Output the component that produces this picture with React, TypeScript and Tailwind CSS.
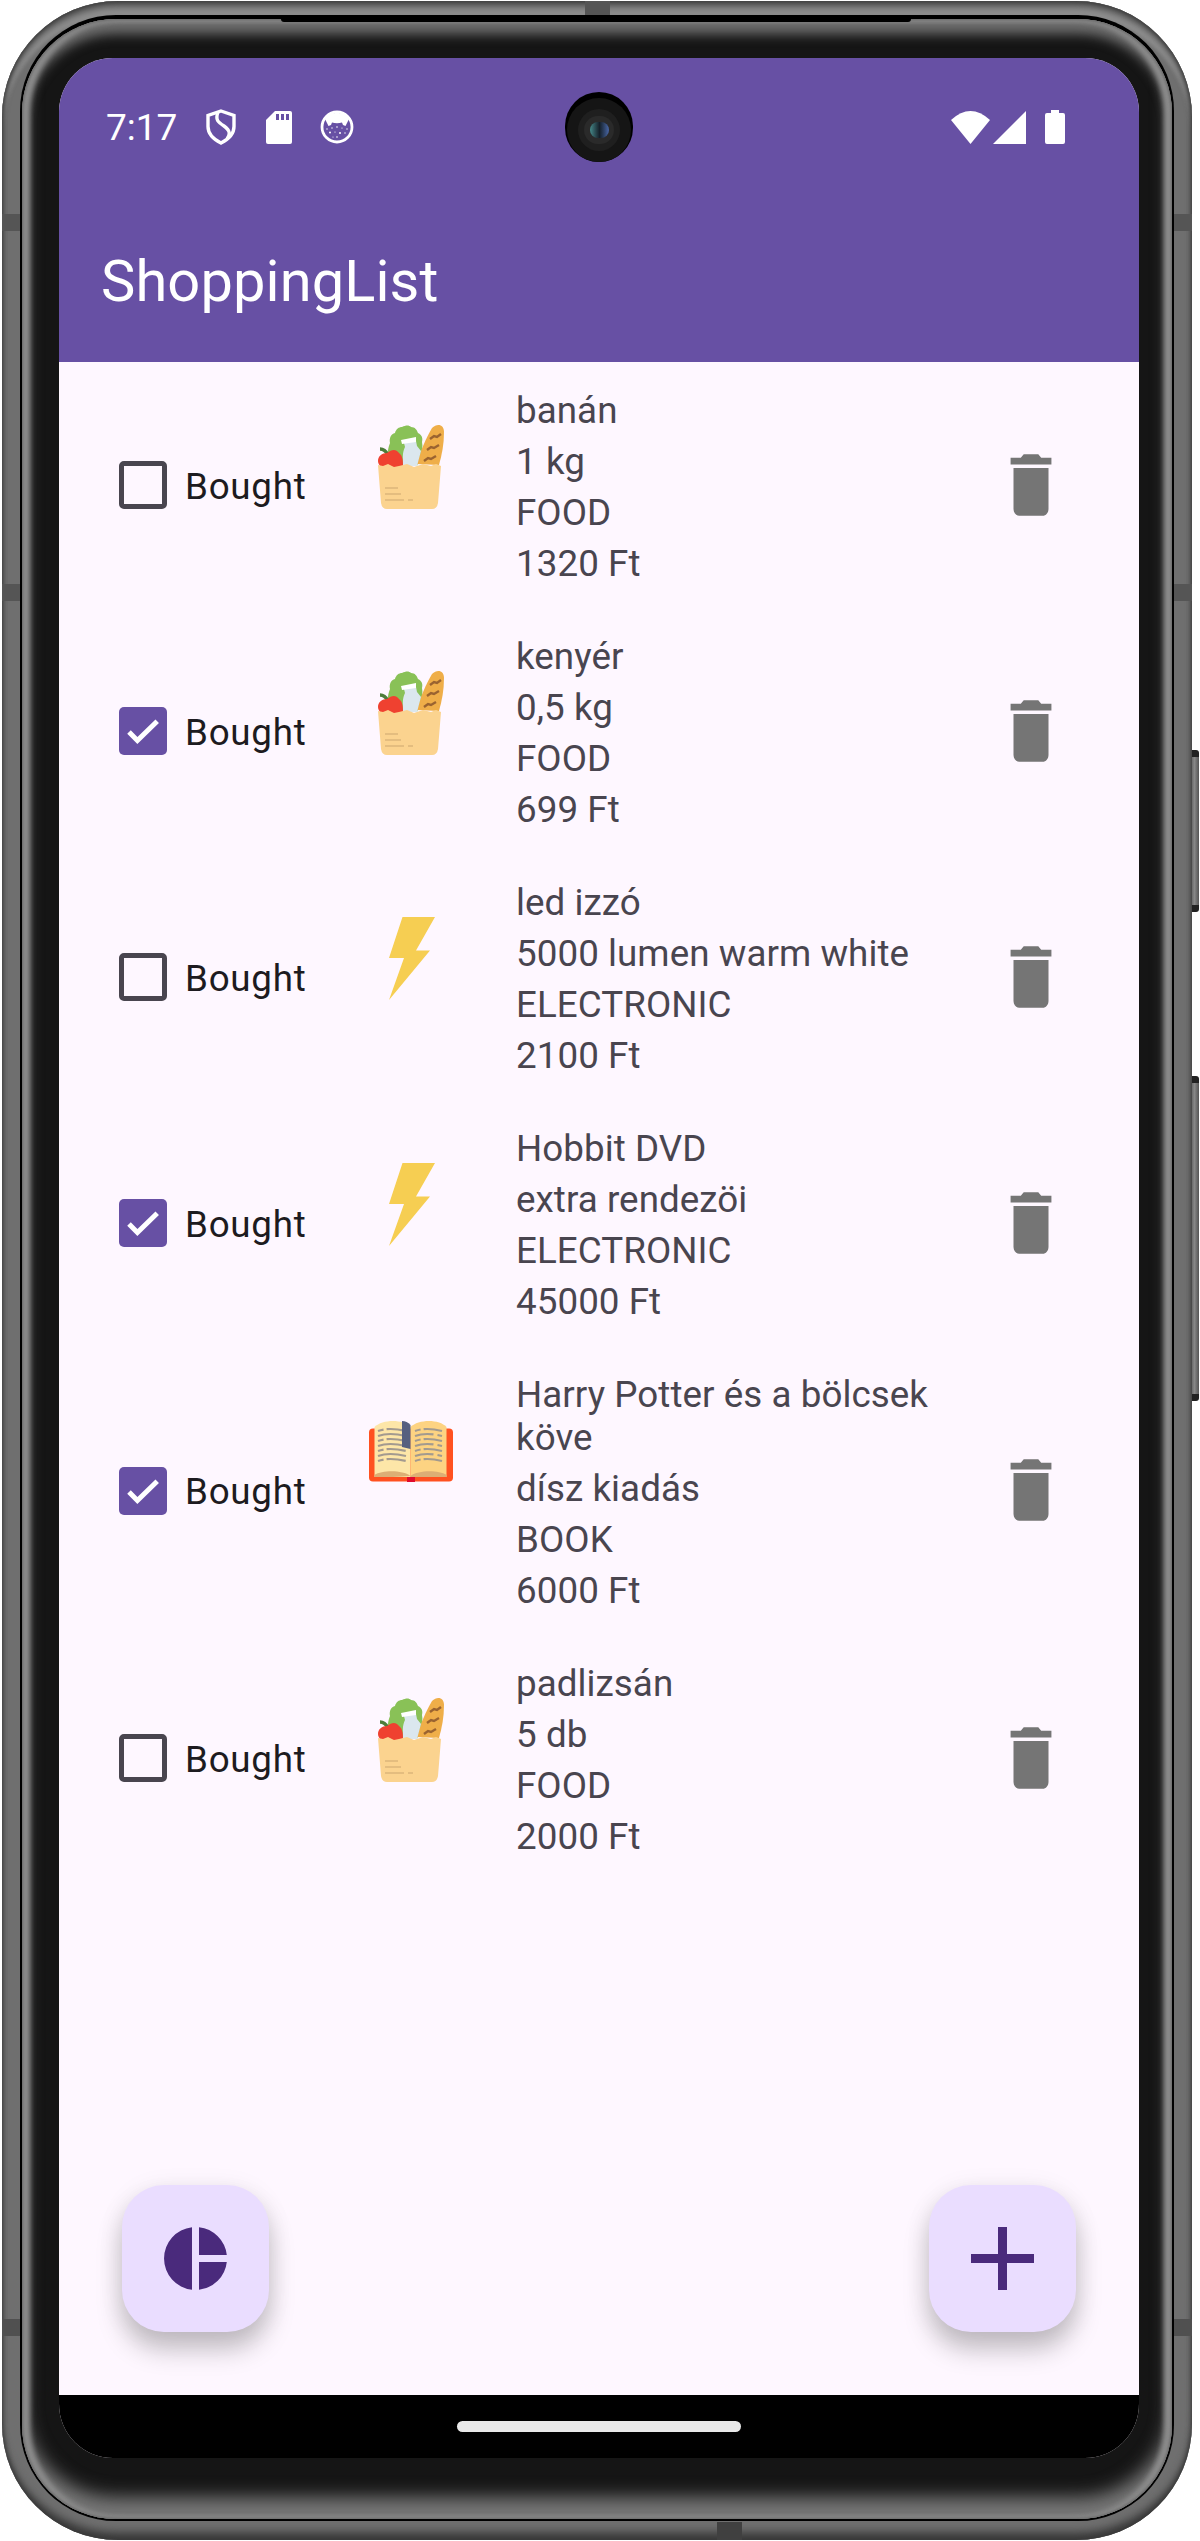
import React from "react";

type Kind = "food" | "electronic" | "book";
type Item = { name: string; detail: string; category: string; price: string; kind: Kind; bought: boolean };

const items: Item[] = [
  { name: "banán", detail: "1 kg", category: "FOOD", price: "1320 Ft", kind: "food", bought: false },
  { name: "kenyér", detail: "0,5 kg", category: "FOOD", price: "699 Ft", kind: "food", bought: true },
  { name: "led izzó", detail: "5000 lumen warm white", category: "ELECTRONIC", price: "2100 Ft", kind: "electronic", bought: false },
  { name: "Hobbit DVD", detail: "extra rendezöi", category: "ELECTRONIC", price: "45000 Ft", kind: "electronic", bought: true },
  { name: "Harry Potter és a bölcsek köve", detail: "dísz kiadás", category: "BOOK", price: "6000 Ft", kind: "book", bought: true },
  { name: "padlizsán", detail: "5 db", category: "FOOD", price: "2000 Ft", kind: "food", bought: false },
];

function Groceries() {
  return (
    <svg width="120" height="130" viewBox="0 0 120 130">
      <path d="M40 66c-3-8-3-16 0-23-1-5 1-9 5-10 1-4 4-6 7-6 4-2 7-2 9 0 4 0 6 3 7 6 4 2 5 5 4 9 1 5 0 8-1 12l-4 12z" fill="#89c157" />
      <path d="M30 49q5 0 8 6" fill="none" stroke="#4d7c3a" strokeWidth="3.4" />
      <path d="M67 64c4-14 8-24 15-36 5-5 12-4 12 4 0 12-2 22-5 33z" fill="#efae49" />
      <path d="M80 39l4-3 3 1 4-3M77 50l4-3 3 1 5-3M74 61l4-3 3 1 5-3" fill="none" stroke="#9a6330" strokeWidth="2.4" />
      <path d="M54 43l12-2 1 5 4 5-4 15H53c0-8-1-13 2-19z" fill="#dbe7ee" />
      <path d="M51 40l15-3v5l-14 2z" fill="#fff" />
      <path d="M28 61c0-5 4-8 9-8 5-4 9-4 12 0 4 3 4 8 4 14H31c-2-2-3-4-3-6z" fill="#ef4130" />
      <path d="M28 65l5 1 5-2 6 3 5-1 8-2 7 3 9-3 8 2 5-2 5 2-3 37q-1 6-6 6H37q-5 0-6-6z" fill="#fbd38f" />
      <path d="M35 88h13M35 94h16M35 100h19M58 100h5" stroke="#e4bd7f" strokeWidth="2.2" />
    </svg>
  );
}

function Bolt() {
  return (
    <svg width="120" height="130" viewBox="0 0 120 130">
      <path d="M52.500 25H85L66 58.500h14L39 108l15-42H39z" fill="#f6ce52" />
    </svg>
  );
}

function Book() {
  const rows = [41, 46, 51, 56, 61, 66, 71];
  return (
    <svg width="120" height="130" viewBox="0 -6 120 130">
      <rect x="19" y="38.500" width="84" height="53" rx="4" fill="#ff5120" />
      <path d="M24.500 37c8-8 29-8 36 0v50h-36z" fill="#fde6a8" />
      <path d="M60.500 37c8-8 29-8 36 0v50h-36z" fill="#fdd382" />
      <path d="M24.500 85c8-5 28-5 36 1-8 1-28 1-36 1zM60.500 86c8-6 28-6 36-1v2h-36z" fill="#dcae75" />
      {rows.map((y, i) => (
        <g key={y} fill="none" stroke="#a39a8f" strokeWidth="2.200">
          <path d={`M28 ${y}q11-4 28 0`} strokeDasharray={i % 2 ? "40" : "6 3 19 3"} />
          <path d={`M65 ${y}q11-4 27 0`} strokeDasharray={i % 2 ? "19 4 8" : "6 3 19"} />
        </g>
      ))}
      <path d="M52 31q5 0 8.500 4v24l-8.500-2z" fill="#56607f" />
      <rect x="57" y="87" width="8" height="5" fill="#e00b2d" />
    </svg>
  );
}

function CheckBox({ checked }: { checked: boolean }) {
  if (!checked) return <div className="-mt-1 h-12 w-12 shrink-0 rounded-[5px] border-[5px] border-[#49454f]" />;
  return (
    <div className="-mt-1 flex h-12 w-12 shrink-0 items-center justify-center rounded-[5px] bg-[#6750a4]">
      <svg width="48" height="48" viewBox="0 0 48 48" fill="none" stroke="#fff" strokeWidth="5">
        <path d="M10 25 18.400 33.500 38.200 14.200" />
      </svg>
    </div>
  );
}

function Row({ item }: { item: Item }) {
  return (
    <li className="flex items-center pt-[27px] pb-[23px] pl-[60px]">
      <CheckBox checked={item.bought} />
      <span className="-mt-[2px] ml-[18px] w-[165px] text-[36.75px] leading-[43px] tracking-[0.75px] text-[#1d1b20]">Bought</span>
      <div className="h-[130px] w-[120px] shrink-0 self-start pt-[11px]">
        {item.kind === "food" ? <Groceries /> : item.kind === "electronic" ? <Bolt /> : <Book />}
      </div>
      <div className="ml-[46px] flex w-[440px] flex-col gap-2 text-[36.75px] leading-[43px] tracking-[0.06px] text-[#49454f]">
        <p>{item.name}</p>
        <p>{item.detail}</p>
        <p>{item.category}</p>
        <p>{item.price}</p>
      </div>
      <svg className="-mt-[5px] ml-[40px]" width="70" height="82" viewBox="0 0 24 24" preserveAspectRatio="none" fill="#757575">
        <path d="M6 19c0 1.100.9 2 2 2h8c1.100 0 2-.9 2-2V7H6v12zM19 4h-3.500l-1-1h-5l-1 1H5v2h14V4z" />
      </svg>
    </li>
  );
}

function Camera() {
  return (
    <div className="absolute top-[34px] left-[506px] flex h-[70px] w-[68px] items-center justify-center rounded-full bg-black pt-[5px]">
      <div className="flex h-[64px] w-[64px] items-center justify-center rounded-full bg-[#151515]">
        <div className="flex h-[42px] w-[42px] items-center justify-center rounded-full bg-[#1f1f1f]">
          <div className="flex h-[28px] w-[30px] items-center justify-center rounded-full bg-[#2a2a2a]">
            <div className="h-[16px] w-[19px] rounded-full bg-linear-to-r from-[#468a8a] via-[#15202a] to-[#4a68a8]" />
          </div>
        </div>
      </div>
    </div>
  );
}

function StatusBar() {
  return (
    <div className="flex h-[138px] items-center pl-[47px] text-white">
      <span className="w-[73px] text-[37px] leading-[43px]">7:17</span>
      <svg className="ml-[27px]" width="30" height="36" viewBox="0 0 30 36" fill="none" stroke="#fff" strokeWidth="3.400">
        <path d="M15 2 28 6.500v11C28 25 22 30.500 15 34 8 30.500 2 25 2 17.500v-11z" />
        <path d="M12 3c-3 8 0 10 6 14 7 5 6 9 3 13" />
      </svg>
      <svg className="ml-[30px]" width="26" height="33" viewBox="0 0 26 33">
        <path d="M9 0h15q2 0 2 2v29q0 2-2 2H2q-2 0-2-2V9z" fill="#fff" />
        <path d="M10 3h3v6h-3zM15 3h3v6h-3zM20 3h3v6h-3z" fill="#6750a4" />
      </svg>
      <svg className="ml-[28px]" width="34" height="34" viewBox="0 0 34 34">
        <circle cx="17" cy="17" r="15" fill="none" stroke="#fff" strokeWidth="2.800" />
        <path d="M5 9C10 1 24 1 29 9l-2 4-1.500 3-2.500-1-1-2.500q-5 1.500-10 0L11 15l-2.500 1L7 13z" fill="#fff" />
        <g fill="#fff">
          <circle cx="7" cy="19" r=".7" /><circle cx="12" cy="18" r=".7" /><circle cx="17" cy="17" r=".8" /><circle cx="22" cy="18" r=".6" />
          <circle cx="27" cy="19" r=".7" /><circle cx="10" cy="22.500" r="1" /><circle cx="15" cy="22" r=".6" /><circle cx="20" cy="23" r="1" />
          <circle cx="25" cy="23" r=".7" /><circle cx="17" cy="27" r=".8" /><circle cx="13" cy="27" r=".6" />
        </g>
      </svg>
      <svg className="ml-auto" width="39" height="33" viewBox="0 0 39 33" fill="#fff">
        <path d="M0 9Q19.500-9 39 9L19.500 33z" />
      </svg>
      <svg className="ml-[3px]" width="33" height="33" viewBox="0 0 33 33" fill="#fff">
        <path d="M33 0v33H0z" />
      </svg>
      <svg className="mr-[74px] ml-[19px]" width="20" height="34" viewBox="0 0 20 34" fill="#fff">
        <path d="M6 0h8v3h4q2 0 2 2v27q0 2-2 2H2q-2 0-2-2V5q0-2 2-2h4z" />
      </svg>
    </div>
  );
}

function Fab({ children }: { children: React.ReactNode }) {
  return (
    <button className="flex h-[147px] w-[147px] items-center justify-center rounded-[42px] bg-[#eaddff] shadow-[0_18px_26px_rgba(0,0,0,0.22),0_4px_26px_rgba(0,0,0,0.08)]">
      {children}
    </button>
  );
}

export default function App() {
  return (
    <div className="relative h-[2541px] w-[1200px] overflow-hidden bg-white pt-px pl-[2px] font-['Roboto',sans-serif]">
      <div className="absolute top-[750px] left-[1190px] h-[162px] w-[9px] rounded-r-[3px] border-y-[7px] border-[#222] bg-linear-to-r from-[#555] via-[#888] to-[#555]" />
      <div className="absolute top-[1076px] left-[1190px] h-[325px] w-[9px] rounded-r-[3px] border-y-[7px] border-[#222] bg-linear-to-r from-[#555] via-[#888] to-[#555]" />
      <div className="relative h-[2539px] w-[1190px] overflow-hidden rounded-[116px] bg-[#6f6f6f] pt-[14px] pl-[18px] shadow-[inset_0_0_4px_1px_#383838,inset_0_-12px_8px_-4px_#3c3c3c,inset_0_7px_7px_-1px_#555,inset_0_16px_4px_0_#909090]">
        <div className="absolute top-0 left-[583px] h-[16px] w-[25px] bg-[#555]" />
        <div className="absolute bottom-0 left-[715px] h-[18px] w-[25px] bg-[#404040]" />
        <div className="absolute top-[213px] left-0 h-[17px] w-[1190px] bg-[#555]" />
        <div className="absolute top-[583px] left-0 h-[17px] w-[1190px] bg-[#555]" />
        <div className="absolute top-[2318px] left-0 h-[17px] w-[1190px] bg-[#505050]" />
        <div className="relative h-[2506px] w-[1154px] rounded-[96px] bg-black pt-[4px] pl-[2px]">
          <div className="h-[2500px] w-[1150px] rounded-[94px] bg-[#151515] pt-[39px] pl-[37px] shadow-[inset_0_0_3px_1px_#666,inset_6px_0_5px_2px_#8d8d8d,inset_-6px_0_5px_2px_#8d8d8d,inset_0_13px_12px_2px_#6e6e6e,inset_0_-20px_18px_2px_#777]">
            <div className="relative flex h-[2400px] w-[1080px] flex-col overflow-hidden rounded-[54px] bg-[#fef7ff]">
              <header className="h-[304px] shrink-0 bg-[#6750a4] text-white">
                <StatusBar />
                <h1 className="mt-[51px] ml-[42px] text-[57.75px] leading-[68px] tracking-[0.12px]">ShoppingList</h1>
              </header>
              <Camera />
              <main className="flex flex-1 flex-col justify-between">
                <ul>
                  {items.map((item) => (
                    <Row key={item.name} item={item} />
                  ))}
                </ul>
                <div className="flex justify-between px-[63px] pb-[63px]">
                  <Fab>
                    <svg width="63" height="63" viewBox="0 0 63 63" fill="#4a2a7c">
                      <path d="M28 .2A31.500 31.500 0 0 0 28 62.800zM35 .2A31.500 31.500 0 0 1 62.800 28H35zM35 35h27.800A31.500 31.500 0 0 1 35 62.800z" />
                    </svg>
                  </Fab>
                  <Fab>
                    <svg width="63" height="63" viewBox="0 0 63 63" fill="#4a2a7c">
                      <path d="M27 0h9v27h27v9H36v27h-9V36H0v-9h27z" />
                    </svg>
                  </Fab>
                </div>
              </main>
              <footer className="flex h-[63px] shrink-0 items-center justify-center bg-black">
                <div className="h-[11px] w-[284px] rounded-full bg-[#e9e9e9]" />
              </footer>
            </div>
          </div>
          <div className="absolute top-[4px] left-[261px] h-[3px] w-[630px] rounded-b-[3px] bg-black" />
        </div>
      </div>
    </div>
  );
}
